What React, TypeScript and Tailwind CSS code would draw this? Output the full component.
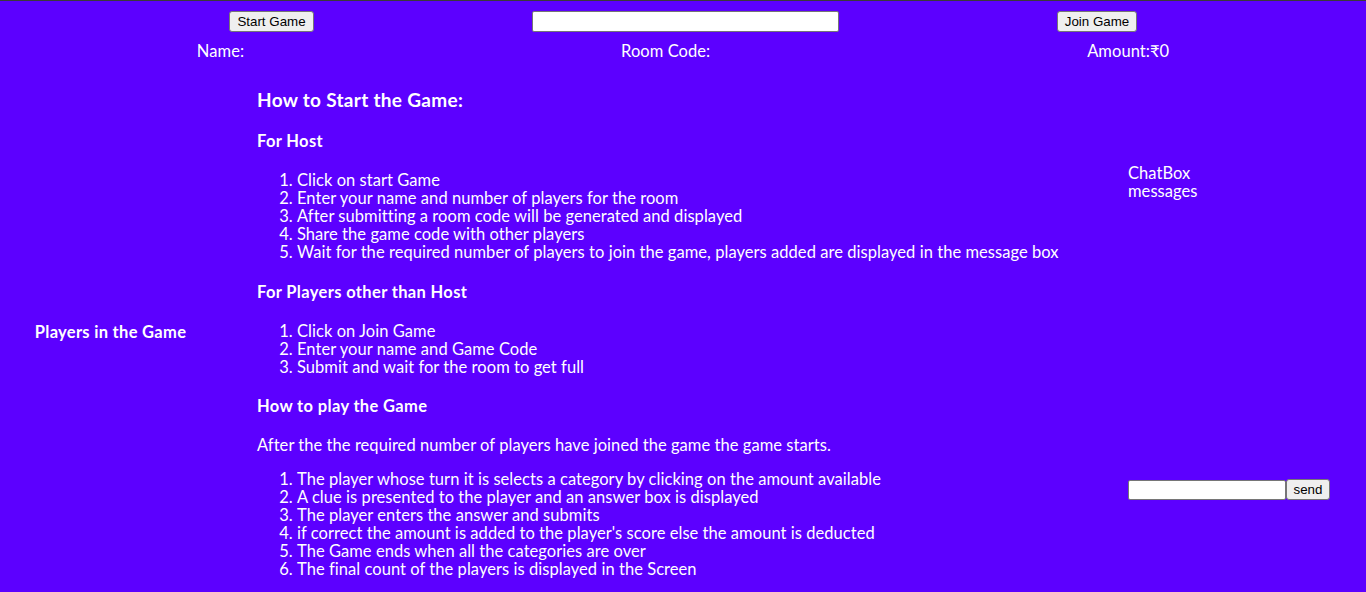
const hostSteps = [
  'Click on start Game',
  'Enter your name and number of players for the room',
  'After submitting a room code will be generated and displayed',
  'Share the game code with other players',
  'Wait for the required number of players to join the game, players added are displayed in the message box',
];

const playerSteps = ['Click on Join Game', 'Enter your name and Game Code', 'Submit and wait for the room to get full'];

const playSteps = [
  'The player whose turn it is selects a category by clicking on the amount available',
  'A clue is presented to the player and an answer box is displayed',
  'The player enters the answer and submits',
  "if correct the amount is added to the player's score else the amount is deducted",
  'The Game ends when all the categories are over',
  'The final count of the players is displayed in the Screen',
];

const btn =
  "bg-[#efefef] text-black border border-[#767676] rounded-[3px] px-[6px] h-[21px] text-[13.33px] leading-[17px] tracking-normal font-['Liberation_Sans',Arial,sans-serif]";

function Steps({ items, className }: { items: string[]; className?: string }) {
  return (
    <ol className={`list-decimal pl-[40px] ${className ?? ''}`}>
      {items.map((s, i) => (
        <li key={i}>{s}</li>
      ))}
    </ol>
  );
}

export default function App() {
  return (
    <div className="min-h-screen bg-[#5c00ff] text-white border-t border-[#3a3a3a] font-['Lato',sans-serif] text-[16.5px] leading-[18px] tracking-[0.05px]">
      {/* Top controls */}
      <div className="flex justify-center items-center gap-[218px] pt-[10px]">
        <button className={`${btn} w-[85px]`}>Start Game</button>
        <input className="bg-white border border-[#767676] rounded-[2px] w-[307px] h-[21px]" />
        <button className={`${btn} w-[80px]`}>Join Game</button>
      </div>
      <div className="flex justify-center gap-[377px] mt-[10px]">
        <span>Name:</span>
        <span>Room Code:</span>
        <span>Amount:₹0</span>
      </div>

      <div className="grid grid-cols-[221px_1fr_238px]">
        {/* Players */}
        <div className="flex items-center justify-center pt-[10px]">
          <h4 className="font-bold tracking-[0.3px]">Players in the Game</h4>
        </div>

        {/* Instructions */}
        <div className="pl-[36px] pt-[29px] pb-[16px]">
          <h3 className="text-[19px] leading-[22px] font-bold tracking-[0.3px]">How to Start the Game:</h3>
          <h4 className="font-bold tracking-[0.35px] mt-[21px]">For Host</h4>
          <Steps items={hostSteps} className="mt-[21px]" />
          <h4 className="font-bold tracking-[0.35px] mt-[22px]">For Players other than Host</h4>
          <Steps items={playerSteps} className="mt-[21px]" />
          <h4 className="font-bold tracking-[0.35px] mt-[21px]">How to play the Game</h4>
          <p className="mt-[21px]">After the the required number of players have joined the game the game starts.</p>
          <Steps items={playSteps} className="mt-[16px]" />
        </div>

        {/* Chat */}
        <div className="flex flex-col pt-[104px]">
          <div className="h-[315px]">
            <p>ChatBox</p>
            <p>messages</p>
          </div>
          <div className="flex items-center">
            <input className="bg-white border border-[#767676] rounded-[2px] w-[158px] h-[20px]" />
            <button className={`${btn} w-[44px] h-[20px]`}>send</button>
          </div>
        </div>
      </div>
    </div>
  );
}
